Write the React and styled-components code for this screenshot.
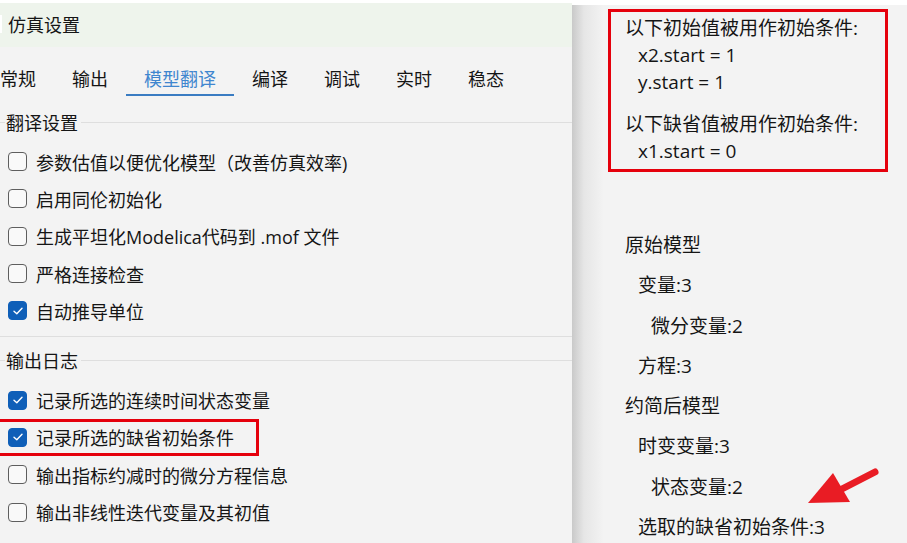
import React from "react";
import styled, { createGlobalStyle } from "styled-components";

const GlobalStyle = createGlobalStyle`
  html, body {
    margin: 0;
    padding: 0;
    background: #ffffff;
  }
  body {
    font-family: "Open Sans", "Noto Sans CJK SC", sans-serif;
    color: #151515;
  }
`;

const Page = styled.div`
  display: flex;
  width: 907px;
  height: 543px;
  overflow: hidden;
  background: #ffffff;
`;

const LeftPanel = styled.div`
  width: 572px;
  flex: none;
  margin-top: 3px;
  background: #f3f3f3;
  overflow: hidden;
`;

const TitleBar = styled.div`
  display: flex;
  align-items: center;
  height: 42px;
  padding-left: 8px;
  padding-bottom: 2px;
  background: #eef4ec;
  font-size: 18px;
  position: relative;
`;

const EdgeMark = styled.span`
  position: absolute;
  left: 0;
  top: 12px;
  width: 2px;
  height: 18px;
  background: #ffffff;
`;

const TabBar = styled.div`
  display: flex;
  margin-left: -18px;
`;

const Tab = styled.div`
  padding: 20px 18px 3px;
  line-height: 24px;
  font-size: 18px;
  color: ${(p) => (p.$active ? "#3f86cf" : "#151515")};
  border-bottom: 2px solid ${(p) => (p.$active ? "#3a7cc2" : "transparent")};
`;

const Section = styled.div`
  margin-top: ${(p) => p.$top}px;
  padding-bottom: ${(p) => p.$bottom}px;
  border-bottom: ${(p) => (p.$closed ? "1px solid #dedede" : "none")};
`;

const Legend = styled.div`
  display: flex;
  align-items: center;
  height: 24px;
  font-size: 18px;

  &::before {
    content: "";
    width: 5px;
    border-top: 1px solid #dedede;
  }
  span {
    padding: 0 3px 0 1px;
  }
  &::after {
    content: "";
    flex: 1;
    border-top: 1px solid #dedede;
  }
`;

const Rows = styled.div`
  display: flex;
  flex-direction: column;
  margin-top: 9px;
`;

const Row = styled.div`
  display: flex;
  align-items: center;
  gap: 9px;
  height: 37.3px;
  box-sizing: border-box;
  font-size: 18px;
  padding-left: ${(p) => (p.$marked ? 11 : 8)}px;
  margin-left: ${(p) => (p.$marked ? -3 : 0)}px;
  width: ${(p) => (p.$marked ? "262px" : "auto")};
  box-shadow: ${(p) => (p.$marked ? "inset 0 0 0 3px #e5000c" : "none")};
  white-space: nowrap;
`;

const Box = styled.span`
  display: inline-flex;
  align-items: center;
  justify-content: center;
  flex: none;
  width: 19px;
  height: 19px;
  box-sizing: border-box;
  border-radius: 4px;
  border: 1px solid ${(p) => (p.$checked ? "#0f5fb8" : "#5e5e5e")};
  background: ${(p) => (p.$checked ? "#0f5fb8" : "#f9f9f9")};
`;

const RightPanel = styled.div`
  flex: 1;
  position: relative;
  margin-top: 5px;
  background: linear-gradient(to right, #c9c9c9 0px, #e6e6e6 12px, #f3f3f3 32px);
  overflow: hidden;
`;

const InitBox = styled.div`
  width: 280px;
  box-sizing: border-box;
  margin: 4px 0 0 36px;
  padding: 3px 10px 4px 14px;
  border: 3px solid #e5000c;
  font-size: 19px;
`;

const Line = styled.div`
  line-height: 27px;
  padding-left: ${(p) => (p.$indent || 0) * 13}px;
  margin-top: ${(p) => p.$gap || 0}px;
  white-space: nowrap;
`;

const Tree = styled.div`
  margin: 53px 0 0 53px;
  font-size: 19px;
`;

const TreeItem = styled.div`
  line-height: 40.3px;
  padding-left: ${(p) => p.$level * 13}px;
  white-space: nowrap;
`;

const Arrow = styled.svg`
  position: absolute;
  left: 228px;
  top: 455px;
`;

const Check = ({ checked }) => (
  <Box $checked={checked}>
    {checked && (
      <svg width="10" height="8" viewBox="0 0 10 8">
        <path d="M1 4.2 L3.8 6.8 L9 1.2" fill="none" stroke="#fff" strokeWidth="1.4" strokeLinecap="round" strokeLinejoin="round" />
      </svg>
    )}
  </Box>
);

const tabs = ["常规", "输出", "模型翻译", "编译", "调试", "实时", "稳态"];

const translateOpts = [
  { label: "参数估值以便优化模型（改善仿真效率)", checked: false },
  { label: "启用同伦初始化", checked: false },
  { label: "生成平坦化Modelica代码到 .mof 文件", checked: false },
  { label: "严格连接检查", checked: false },
  { label: "自动推导单位", checked: true },
];

const logOpts = [
  { label: "记录所选的连续时间状态变量", checked: true },
  { label: "记录所选的缺省初始条件", checked: true, marked: true },
  { label: "输出指标约减时的微分方程信息", checked: false },
  { label: "输出非线性迭代变量及其初值", checked: false },
];

const tree = [
  ["原始模型", 0],
  ["变量:3", 1],
  ["微分变量:2", 2],
  ["方程:3", 1],
  ["约简后模型", 0],
  ["时变变量:3", 1],
  ["状态变量:2", 2],
  ["选取的缺省初始条件:3", 1],
];

export default function App() {
  return (
    <>
      <GlobalStyle />
      <Page>
        <LeftPanel>
          <TitleBar>
            <EdgeMark />
            仿真设置
          </TitleBar>
          <TabBar>
            {tabs.map((t) => (
              <Tab key={t} $active={t === "模型翻译"}>{t}</Tab>
            ))}
          </TabBar>

          <Section $top={14} $bottom={7} $closed>
            <Legend><span>翻译设置</span></Legend>
            <Rows>
              {translateOpts.map((o) => (
                <Row key={o.label}>
                  <Check checked={o.checked} />
                  {o.label}
                </Row>
              ))}
            </Rows>
          </Section>

          <Section $top={11} $bottom={0}>
            <Legend><span>输出日志</span></Legend>
            <Rows>
              {logOpts.map((o) => (
                <Row key={o.label} $marked={o.marked}>
                  <Check checked={o.checked} />
                  {o.label}
                </Row>
              ))}
            </Rows>
          </Section>
        </LeftPanel>

        <RightPanel>
          <InitBox>
            <Line>以下初始值被用作初始条件:</Line>
            <Line $indent={1}>x2.start = 1</Line>
            <Line $indent={1}>y.start = 1</Line>
            <Line $gap={15}>以下缺省值被用作初始条件:</Line>
            <Line $indent={1}>x1.start = 0</Line>
          </InitBox>

          <Tree>
            {tree.map(([text, level]) => (
              <TreeItem key={text} $level={level}>{text}</TreeItem>
            ))}
          </Tree>

          <Arrow width="90" height="60" viewBox="0 0 90 60">
            <line x1="75" y1="12" x2="40" y2="30" stroke="#e91c24" strokeWidth="7" strokeLinecap="round" />
            <polygon points="8,43 33,13 50,42" fill="#e91c24" />
          </Arrow>
        </RightPanel>
      </Page>
    </>
  );
}
